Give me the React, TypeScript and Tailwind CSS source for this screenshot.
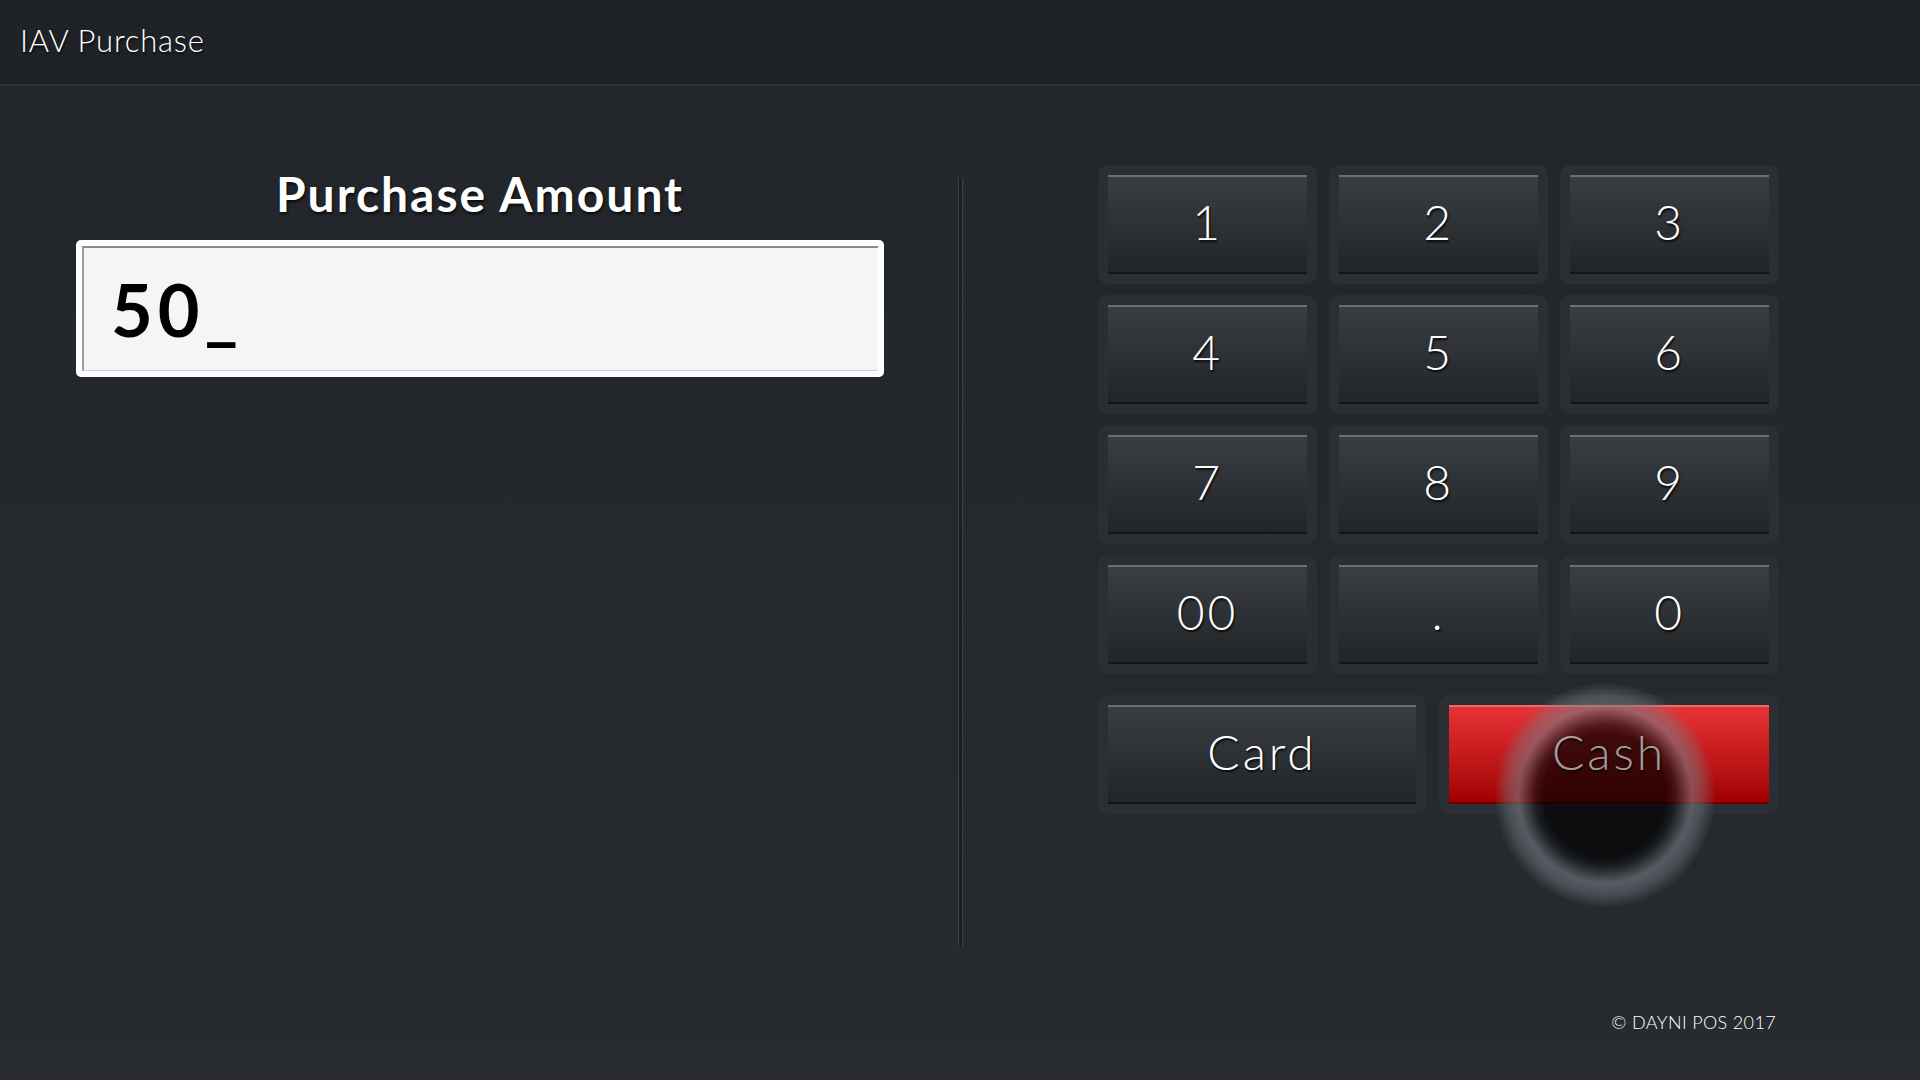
import React from "react";

const keys = ["1", "2", "3", "4", "5", "6", "7", "8", "9", "00", ".", "0"];

function KeyButton({ label, red = false }: { label: string; red?: boolean }) {
  return (
    <div className="h-[119px] rounded-[10px] bg-[#2b2f33] p-[10px]">
      <button
        className={`flex h-full w-full items-center justify-center border-t-2 border-b-2 pb-[6px] text-[48px] font-light tracking-[0.06em] [text-shadow:1px_2px_2px_rgba(0,0,0,0.85)] ${
          red
            ? "border-t-[#ef6a6a] border-b-[#6a0000] bg-gradient-to-b from-[#e63236] via-[#c51a1c] to-[#a10000]"
            : "border-t-[#6c6f72] border-b-[#131517] bg-gradient-to-b from-[#3a3e42] to-[#212528]"
        }`}
      >
        <span className={red ? "relative z-10 text-white/60" : "text-white"}>{label}</span>
      </button>
    </div>
  );
}

export default function App() {
  return (
    <div className="relative flex h-screen w-full flex-col overflow-hidden bg-gradient-to-b from-[#22262a] to-[#272b30] font-['Lato','Liberation_Sans',sans-serif] text-white">
      {/* header */}
      <header className="flex h-[86px] shrink-0 items-center border-b-2 border-[#2e3237] bg-[#1f2327] pb-[4px] pl-[20px]">
        <h1 className="text-[31px] font-light leading-none tracking-[0.025em] [text-shadow:1px_2px_2px_rgba(0,0,0,0.7)]">
          IAV Purchase
        </h1>
      </header>

      <main className="flex flex-1">
        {/* left: amount */}
        <section className="ml-[76px] w-[808px] pt-[80px]">
          <h2 className="text-center text-[48px] font-bold leading-[56px] tracking-[2px] [text-shadow:1px_2px_3px_rgba(0,0,0,0.8)]">
            Purchase Amount
          </h2>
          <div className="mt-[18px] rounded-[5px] bg-white p-[6px]">
            <div className="flex h-[125px] items-center border-t-2 border-l-2 border-b border-t-[#8c8c8c] border-l-[#9a9a9a] border-b-[#d0d0d0] bg-[#f5f5f5] pl-[27px]">
              <span className="text-[72px] font-bold leading-none tracking-[5px] text-black">50_</span>
            </div>
          </div>
        </section>

        {/* divider */}
        <div className="ml-[74px] mt-[91px] h-[771px] w-[5px] rounded-full border-x border-[#3a3f44] bg-[#1b1e21] shadow-[1px_0_0_#2c3034]" />

        {/* keypad */}
        <section className="ml-[135px] w-[681px] pt-[79px]">
          <div className="grid grid-cols-3 gap-x-[12px] gap-y-[11px]">
            {keys.map((k) => (
              <KeyButton key={k} label={k} />
            ))}
          </div>
          <div className="mt-[21px] grid grid-cols-[328px_340px] gap-x-[13px]">
            <KeyButton label="Card" />
            <KeyButton label="Cash" red />
          </div>
        </section>
      </main>

      <footer className="flex shrink-0 justify-end pb-[49px] pr-[144px]">
        <span className="text-[18px] font-light leading-none tracking-[0.02em]">© DAYNI POS 2017</span>
      </footer>

      {/* touch indicator over Cash */}
      <div className="pointer-events-none absolute left-[1494px] top-[682px] z-0 h-[226px] w-[222px] rounded-full bg-[radial-gradient(closest-side,rgba(0,0,0,1)_0%,rgba(0,0,0,1)_55%,rgba(20,22,26,0.95)_63%,rgba(120,126,134,0.85)_78%,rgba(120,126,134,0.6)_88%,rgba(120,126,134,0)_100%)] opacity-70" />
    </div>
  );
}
